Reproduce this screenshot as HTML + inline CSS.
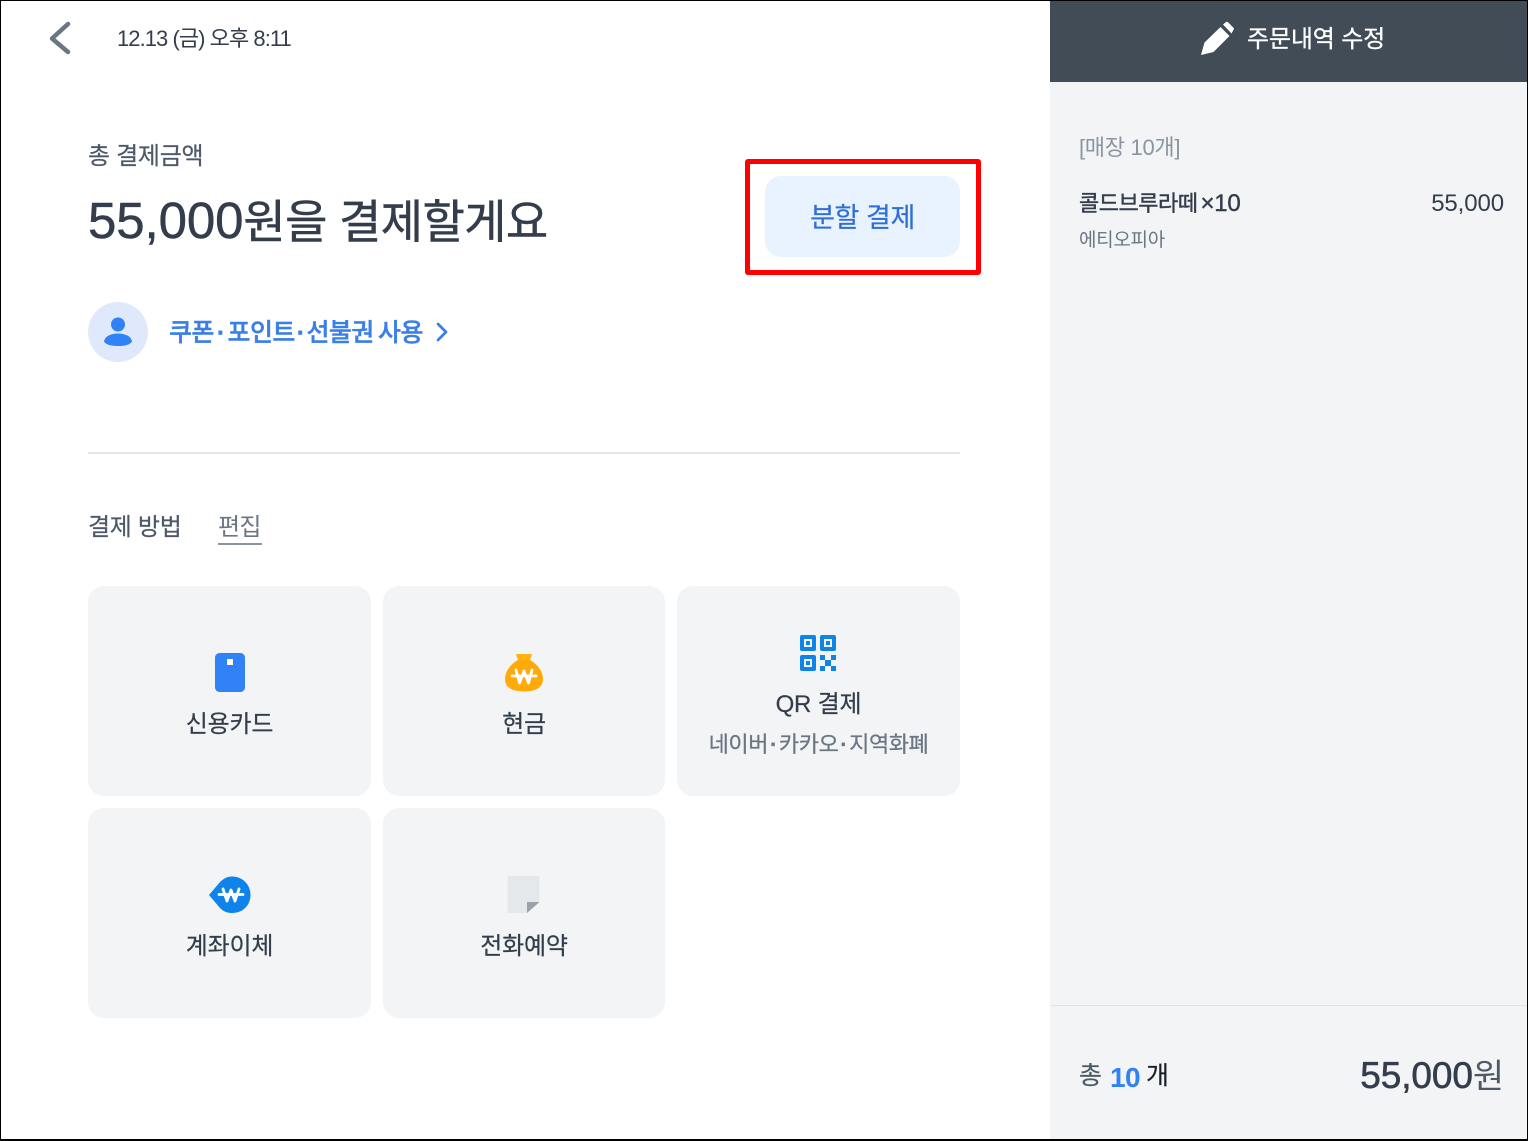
<!DOCTYPE html>
<html lang="ko">
<head>
<meta charset="utf-8">
<title>결제</title>
<style>
html,body{margin:0;padding:0;background:#fff}
body{width:1528px;height:1141px;position:relative;overflow:hidden;font-family:"Liberation Sans","Noto Sans CJK KR",sans-serif;color:#333d4b}
.t{position:absolute;white-space:nowrap;line-height:1.2}
.b{position:absolute;box-sizing:border-box}
.card{position:absolute;background:#f2f4f6;border-radius:16px}
.lbl{position:absolute;left:0;right:0;text-align:center;font-size:24px;line-height:30px;color:#333d4b;white-space:nowrap;letter-spacing:-.2px;-webkit-text-stroke:.2px #333d4b}
.d{padding:0 2px;font-weight:700}
svg{position:absolute;display:block}
</style>
</head>
<body>
<div class="b" style="left:1050px;top:0;width:478px;height:1141px;background:#f2f4f6"></div>
<div class="b" style="left:1050px;top:0;width:478px;height:82px;background:#414c57"></div>
<div class="b" style="left:1050px;top:1005px;width:478px;height:1px;background:#dfe2e6"></div>

<svg style="left:44px;top:18px" width="32" height="40" viewBox="0 0 32 40"><path d="M24 6 L8 20.500 L24 34" fill="none" stroke="#6b7684" stroke-width="4.500" stroke-linecap="round" stroke-linejoin="round"/></svg>
<div class="t" style="left:117px;top:26px;font-size:22px;letter-spacing:-.95px;color:#333d4b">12.13 (금) 오후 8:11</div>

<svg style="left:1198px;top:20px" width="38" height="38" viewBox="0 0 38 38"><path d="M3 35 L6.500 22.500 L22.500 7 L31.500 16 L15.500 32 Z" fill="#fff"/><path d="M25 4.500 L28 2 Q29 1.300 30 2.200 L35.500 7.800 Q36.300 8.800 35.500 9.800 L33.500 13.500 Z" fill="#fff"/></svg>
<div class="t" style="left:1247px;top:26px;font-size:24px;letter-spacing:-.15px;color:#fff;-webkit-text-stroke:.3px #fff">주문내역 수정</div>

<div class="t" style="left:88px;top:143px;font-size:24px;letter-spacing:-.3px;color:#4e5968;-webkit-text-stroke:.2px #4e5968">총 결제금액</div>
<div class="t" style="left:88px;top:190px;font-size:46px;letter-spacing:-.6px;color:#333d4b;-webkit-text-stroke:.5px #333d4b"><span style="font-size:51px;letter-spacing:-.1px">55,000</span>원을 결제할게요</div>

<div class="b" style="left:745px;top:159px;width:236px;height:116px;border:5px solid #f00;border-radius:3px"></div>
<div class="b" style="left:765px;top:176px;width:195px;height:81px;background:#e8f3ff;border-radius:16px"></div>
<div class="t" style="left:765px;top:202px;width:195px;text-align:center;font-size:27px;letter-spacing:-.4px;color:#2f6fd6;-webkit-text-stroke:.2px #2f6fd6">분할 결제</div>

<div class="b" style="left:88px;top:302px;width:60px;height:60px;border-radius:50%;background:#dfe9fb"></div>
<svg style="left:104px;top:317px" width="28" height="30" viewBox="0 0 28 30"><circle cx="14" cy="7.500" r="7" fill="#3182f6"/><path d="M0 24.500 C1 19 7 16.500 14 16.500 C21 16.500 27 19 28 24.500 C26 28 20 29 14 29 C8 29 2 28 0 24.500 Z" fill="#3182f6"/></svg>
<div class="t" style="left:169px;top:318px;font-size:25px;font-weight:500;letter-spacing:-.6px;word-spacing:-2px;color:#3b7fe6;-webkit-text-stroke:.4px #3b7fe6">쿠폰<span class="d" style="padding:0 3px">·</span>포인트<span class="d">·</span>선불권 사용</div>
<svg style="left:434px;top:321px" width="16" height="22" viewBox="0 0 16 22"><path d="M4 3 L12 11 L4 19" fill="none" stroke="#3b7fe6" stroke-width="2.700" stroke-linecap="round" stroke-linejoin="round"/></svg>

<div class="b" style="left:88px;top:452px;width:872px;height:2px;background:#e5e8eb"></div>

<div class="t" style="left:88px;top:514px;font-size:24px;letter-spacing:-.3px;color:#4e5968;-webkit-text-stroke:.2px #4e5968">결제 방법</div>
<div class="t" style="left:218px;top:514px;font-size:24px;letter-spacing:-.75px;color:#6b7684">편집</div>
<div class="b" style="left:218px;top:543px;width:44px;height:2px;background:#8b95a1"></div>

<div class="card" style="left:88px;top:586px;width:283px;height:210px">
  <svg style="left:127px;top:67px" width="30" height="40" viewBox="0 0 30 40"><rect width="30" height="39" rx="4.500" fill="#3182f6"/><rect x="12" y="6" width="6" height="6" fill="#fff"/></svg>
  <div class="lbl" style="top:124px">신용카드</div>
</div>
<div class="card" style="left:383px;top:586px;width:282px;height:210px">
  <svg style="left:121px;top:67px" width="40" height="40" viewBox="0 0 40 40"><path d="M12 1 H28 L26 7 H14 Z" fill="#ffb30f"/><path d="M14 7 H26 C33 11 39 18 39 26 C39 35 31 38.500 20 38.500 C9 38.500 1 35 1 26 C1 18 7 11 14 7 Z" fill="#ffa90a"/><path d="M8 23 H32 M12 17 L15.500 30 L20 18 L24.500 30 L28 17" fill="none" stroke="#fff" stroke-width="2.800" stroke-linejoin="round" stroke-linecap="round"/></svg>
  <div class="lbl" style="top:124px">현금</div>
</div>
<div class="card" style="left:677px;top:586px;width:283px;height:210px">
  <svg style="left:122px;top:48px" width="40" height="38" viewBox="0 0 40 38" fill="#0e84ea"><path fill-rule="evenodd" d="M3 1H15a2 2 0 0 1 2 2V15a2 2 0 0 1-2 2H3a2 2 0 0 1-2-2V3A2 2 0 0 1 3 1ZM5 5V13H13V5Z"/><rect x="7" y="7" width="4" height="4"/><path fill-rule="evenodd" d="M23 1H35a2 2 0 0 1 2 2V15a2 2 0 0 1-2 2H23a2 2 0 0 1-2-2V3A2 2 0 0 1 23 1ZM25 5V13H33V5Z"/><rect x="27" y="7" width="4" height="4"/><path fill-rule="evenodd" d="M3 21H15a2 2 0 0 1 2 2V35a2 2 0 0 1-2 2H3a2 2 0 0 1-2-2V23A2 2 0 0 1 3 21ZM5 25V33H13V25Z"/><rect x="7" y="27" width="4" height="4"/><rect x="21" y="21" width="5" height="5"/><rect x="32" y="21" width="5" height="5"/><rect x="26" y="26" width="6" height="6"/><rect x="21" y="32" width="5" height="5"/><rect x="32" y="32" width="5" height="5"/></svg>
  <div class="lbl" style="top:104px">QR 결제</div>
  <div class="lbl" style="top:144px;font-size:22px;color:#6b7684;letter-spacing:-.45px;-webkit-text-stroke:.25px #6b7684">네이버<span class="d">·</span>카카오<span class="d">·</span>지역화폐</div>
</div>
<div class="card" style="left:88px;top:808px;width:283px;height:210px">
  <svg style="left:120px;top:68px" width="44" height="38" viewBox="0 0 44 38"><path d="M1 19 L12 6 C16 2 20 .5 24 .5 C35 .5 42.500 9 42.500 19 C42.500 29 35 37 24 37 C20 37 16 36 12 32 Z" fill="#0e84ea"/><path d="M11 18.500 H35 M15 13 L19 25 L23 14 L27 25 L31 13" fill="none" stroke="#fff" stroke-width="2.800" stroke-linejoin="round" stroke-linecap="round"/></svg>
  <div class="lbl" style="top:124px">계좌이체</div>
</div>
<div class="card" style="left:383px;top:808px;width:282px;height:210px">
  <svg style="left:124px;top:68px" width="34" height="38" viewBox="0 0 34 38"><path d="M.500 0 H32.500 V26 L20 37 H.500 Z" fill="#e5e8eb"/><path d="M32.500 26 L20 37 V26 Z" fill="#9aa1a9"/></svg>
  <div class="lbl" style="top:124px">전화예약</div>
</div>

<div class="t" style="left:1079px;top:135px;font-size:22px;letter-spacing:-.3px;color:#8b95a1">[매장 10개]</div>
<div class="t" style="left:1079px;top:190px;font-size:22px;letter-spacing:-.5px;color:#333d4b;-webkit-text-stroke:.4px #333d4b">콜드브루라떼<span style="font-size:24px;padding-left:3px;letter-spacing:-.2px">×10</span></div>
<div class="t" style="right:24px;top:190px;font-size:24px;letter-spacing:-.1px;color:#333d4b">55,000</div>
<div class="t" style="left:1079px;top:230px;font-size:19px;letter-spacing:-.3px;color:#6b7684">에티오피아</div>

<div class="t" style="left:1079px;top:1061px;font-size:25px;color:#4e5968;-webkit-text-stroke:.2px #4e5968">총</div>
<div class="t" style="left:1110px;top:1061px;font-size:28px;font-weight:700;letter-spacing:-.6px;color:#3182f6">10</div>
<div class="t" style="left:1146px;top:1061px;font-size:25px;color:#191f28;-webkit-text-stroke:.2px #191f28">개</div>
<div class="t" style="right:24px;top:1054px;font-size:37px;letter-spacing:-.1px;color:#333d4b;-webkit-text-stroke:.6px #333d4b">55,000<span style="-webkit-text-stroke:0;font-size:34px;color:#4e5968">원</span></div>

<div class="b" style="left:0;top:0;width:1528px;height:1141px;border:1px solid #000;border-bottom-width:2px;pointer-events:none"></div>
</body>
</html>
